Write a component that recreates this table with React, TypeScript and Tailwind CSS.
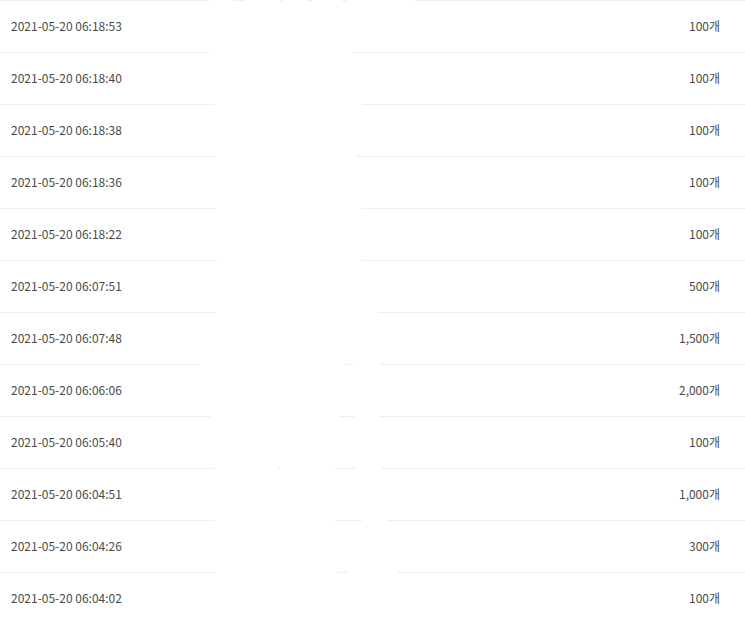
import React from 'react';

type Row = { time: string; amount: string; gaps: [number, number][] };

// gaps in the top divider of each row (the middle columns are blanked out)
const rows: Row[] = [
  { time: '2021-05-20 06:18:53', amount: '100개', gaps: [[209, 233], [245, 280], [283, 308], [312, 342], [347, 415]] },
  { time: '2021-05-20 06:18:40', amount: '100개', gaps: [[210, 352]] },
  { time: '2021-05-20 06:18:38', amount: '100개', gaps: [[215, 362]] },
  { time: '2021-05-20 06:18:36', amount: '100개', gaps: [[215, 355]] },
  { time: '2021-05-20 06:18:22', amount: '100개', gaps: [[216, 361]] },
  { time: '2021-05-20 06:07:51', amount: '500개', gaps: [[217, 362]] },
  { time: '2021-05-20 06:07:48', amount: '1,500개', gaps: [[216, 378]] },
  { time: '2021-05-20 06:06:06', amount: '2,000개', gaps: [[200, 346], [354, 379]] },
  { time: '2021-05-20 06:05:40', amount: '100개', gaps: [[211, 340], [355, 379]] },
  { time: '2021-05-20 06:04:51', amount: '1,000개', gaps: [[214, 277], [280, 334], [356, 381]] },
  { time: '2021-05-20 06:04:26', amount: '300개', gaps: [[215, 335], [362, 388]] },
  { time: '2021-05-20 06:04:02', amount: '100개', gaps: [[216, 338], [349, 397]] },
];

function Divider({ gaps }: { gaps: [number, number][] }) {
  const parts: React.ReactNode[] = [];
  let x = 0;
  gaps.forEach(([a, b], i) => {
    parts.push(<div key={'l' + i} className="h-px bg-[#efefef]" style={{ width: a - x }} />);
    parts.push(<div key={'g' + i} className="h-px bg-white" style={{ width: b - a }} />);
    x = b;
  });
  parts.push(<div key="end" className="h-px flex-1 bg-[#efefef]" />);
  return <div className="flex w-full">{parts}</div>;
}

export default function App() {
  return (
    <div className="w-[745px] h-[624px] overflow-hidden bg-white font-['Noto_Sans_CJK_KR','Noto_Sans',sans-serif] text-[12px] text-[#4a4a4a]">
      {rows.map((r, i) => (
        <div key={i}>
          <Divider gaps={r.gaps} />
          <div className="h-[51px] flex items-center justify-between pl-[11px] pr-[25px] pb-[2px]">
            <span>{r.time}</span>
            <span>{r.amount}</span>
          </div>
        </div>
      ))}
    </div>
  );
}
